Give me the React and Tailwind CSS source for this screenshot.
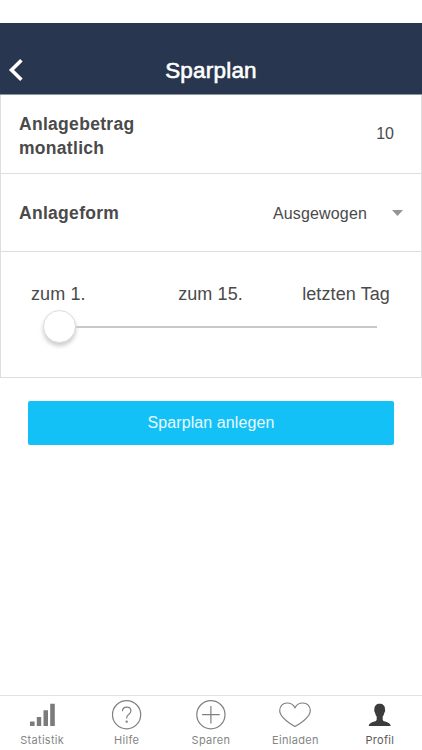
import React, { useState } from 'react';

const days = ['zum 1.', 'zum 15.', 'letzten Tag'];

const StatsIcon = () => (
  <svg className="h-[30px] w-8" viewBox="0 0 32 30" fill="#7b7b7b">
    <path d="M4 21.5h4.6V26H4zM10.8 17h4.4v9h-4.4zM17.5 10.3H22V26h-4.5zM24.2 3.7h4.6V26h-4.6z" />
  </svg>
);

const HelpIcon = () => (
  <svg className="h-[30px] w-8" viewBox="0 0 32 30" fill="none" stroke="#808080" strokeWidth="1.2">
    <circle cx="15.6" cy="14.7" r="14.1" />
    <path d="M11.4 11.3c0-2.5 1.8-4.2 4.3-4.2 2.500 0 4.200 1.500 4.200 3.700 0 1.700-.9 2.700-2.300 3.700-1.400 1-1.900 1.800-1.900 3.300v.6" />
    <circle cx="15.700" cy="21.600" r=".6" />
  </svg>
);

const PlusIcon = () => (
  <svg className="h-[30px] w-8" viewBox="0 0 32 30" fill="none" stroke="#808080" strokeWidth="1.2">
    <circle cx="15.900" cy="14.700" r="14.100" />
    <path d="M15.900 6v17.500M7.100 14.700h17.600" />
  </svg>
);

const HeartIcon = () => (
  <svg className="h-[30px] w-8" viewBox="0 0 32 30" fill="none" stroke="#808080" strokeWidth="1.2">
    <path d="M16 26.600C9.500 22.800.7 17 .7 10.500.7 6.100 3.900 3 8 3c3.500 0 6.500 1.800 8 4.700C17.500 4.800 20.500 3 24 3c4.100 0 7.300 3.100 7.300 7.500 0 6.500-8.800 12.300-15.300 16.100z" />
  </svg>
);

const ProfileIcon = () => (
  <svg className="h-[30px] w-8" viewBox="0 0 32 30" fill="#3c3c3c">
    <path d="M15.700 3.700c-3.300 0-5.300 2-5.300 5.200 0 1-.3 1.300-.1 2.400.2.900.7 1.100.9 2 .3 1.600.9 2.400 1.500 3.300v2.600c0 1.300-.7 1.800-2.400 2.400-3.300 1.100-5.200 2-5.600 4.400h22c-.4-2.400-2.300-3.300-5.600-4.400-1.700-.6-2.400-1.100-2.400-2.400v-2.600c.6-.9 1.200-1.700 1.500-3.300.2-.9.7-1.100.9-2 .2-1.100-.1-1.400-.1-2.400 0-3.200-2-5.200-5.300-5.200z" />
  </svg>
);

const tabs = [
  { label: 'Statistik', Icon: StatsIcon },
  { label: 'Hilfe', Icon: HelpIcon },
  { label: 'Sparen', Icon: PlusIcon },
  { label: 'Einladen', Icon: HeartIcon },
  { label: 'Profil', Icon: ProfileIcon },
];

export default function App() {
  const [day, setDay] = useState(0);
  const [active, setActive] = useState('Profil');

  return (
    <div className="flex h-[750px] w-full flex-col bg-white pt-[23px] font-['Liberation_Sans',Arial,sans-serif] text-[#4a4a4a]">
      <header className="grid h-[72px] grid-cols-[40px_1fr_40px] items-end border-b border-[#8e95a1] bg-[#28374f] pb-[9px] text-white">
        <button type="button" aria-label="Zurück" className="pb-[3px] pl-[8px]">
          <svg className="h-6 w-4" viewBox="0 0 16 24" fill="none" stroke="#fff" strokeWidth="3.6">
            <path d="M13.400 2.200 3.500 12l9.900 9.800" />
          </svg>
        </button>
        <h1 className="text-center text-[22.500px] leading-7 tracking-[0.2px] [-webkit-text-stroke:0.6px_white]">
          Sparplan
        </h1>
      </header>

      <main className="flex-1">
        <div className="border border-t-0 border-[#dedede]">
          <div className="flex h-[79px] items-center justify-between border-b border-[#dedede] pr-[27px] pl-[18px]">
            <label className="w-32 pt-[4px] text-[17.5px] leading-[24.5px] font-bold tracking-[0.3px]">
              Anlagebetrag monatlich
            </label>
            <span className="text-base">10</span>
          </div>

          <div className="flex h-[78px] items-center border-b border-[#dedede] pr-[18px] pl-[18px]">
            <label className="flex-1 pt-0.5 text-[17.5px] font-bold tracking-[0.3px]">
              Anlageform
            </label>
            <span className="pt-0.5 text-base tracking-[0.15px]">Ausgewogen</span>
            <svg className="ml-[25px] h-1.5 w-[11px]" viewBox="0 0 11 6" fill="#959595">
              <path d="M0 0h11L5.500 6z" />
            </svg>
          </div>

          <div className="h-[125px] pt-[30px] pr-[31px] pl-[30px]">
            <div className="grid grid-cols-3 text-[18px] leading-6 tracking-[0.1px]">
              {days.map((label, i) => (
                <button
                  key={label}
                  type="button"
                  onClick={() => setDay(i)}
                  className="first:text-left last:text-right"
                >
                  {label}
                </button>
              ))}
            </div>
            <div className="mt-1 mr-[13px] ml-[12px] flex h-[33px] items-center">
              <div className="h-0.5 bg-[#c9c9c9]" style={{ width: `${day * 45}%` }} />
              <div className="size-[33px] shrink-0 rounded-full border border-[#dcdcdc] bg-white shadow-[0_3px_4px_rgba(0,0,0,0.2)]" />
              <div className="h-0.5 flex-1 bg-[#c9c9c9]" />
            </div>
          </div>
        </div>

        <div className="px-7 pt-[23px]">
          <button
            type="button"
            className="h-11 w-full rounded-xs bg-[#14c1f6] text-base tracking-[0.1px] text-[#e9f9ff]"
          >
            Sparplan anlegen
          </button>
        </div>
      </main>

      <nav className="grid h-[55px] grid-cols-5 border-t border-[#e2e2e2] font-['Inter',sans-serif]">
        {tabs.map(({ label, Icon }) => (
          <button
            key={label}
            type="button"
            onClick={() => setActive(label)}
            className={`flex flex-col items-center pt-[4px] text-[11px] leading-4 tracking-[0.3px] ${
              active === label ? 'text-[#5a5a5a]' : 'text-[#858585]'
            }`}
          >
            <Icon />
            <span className="mt-[2px]">{label}</span>
          </button>
        ))}
      </nav>
    </div>
  );
}
